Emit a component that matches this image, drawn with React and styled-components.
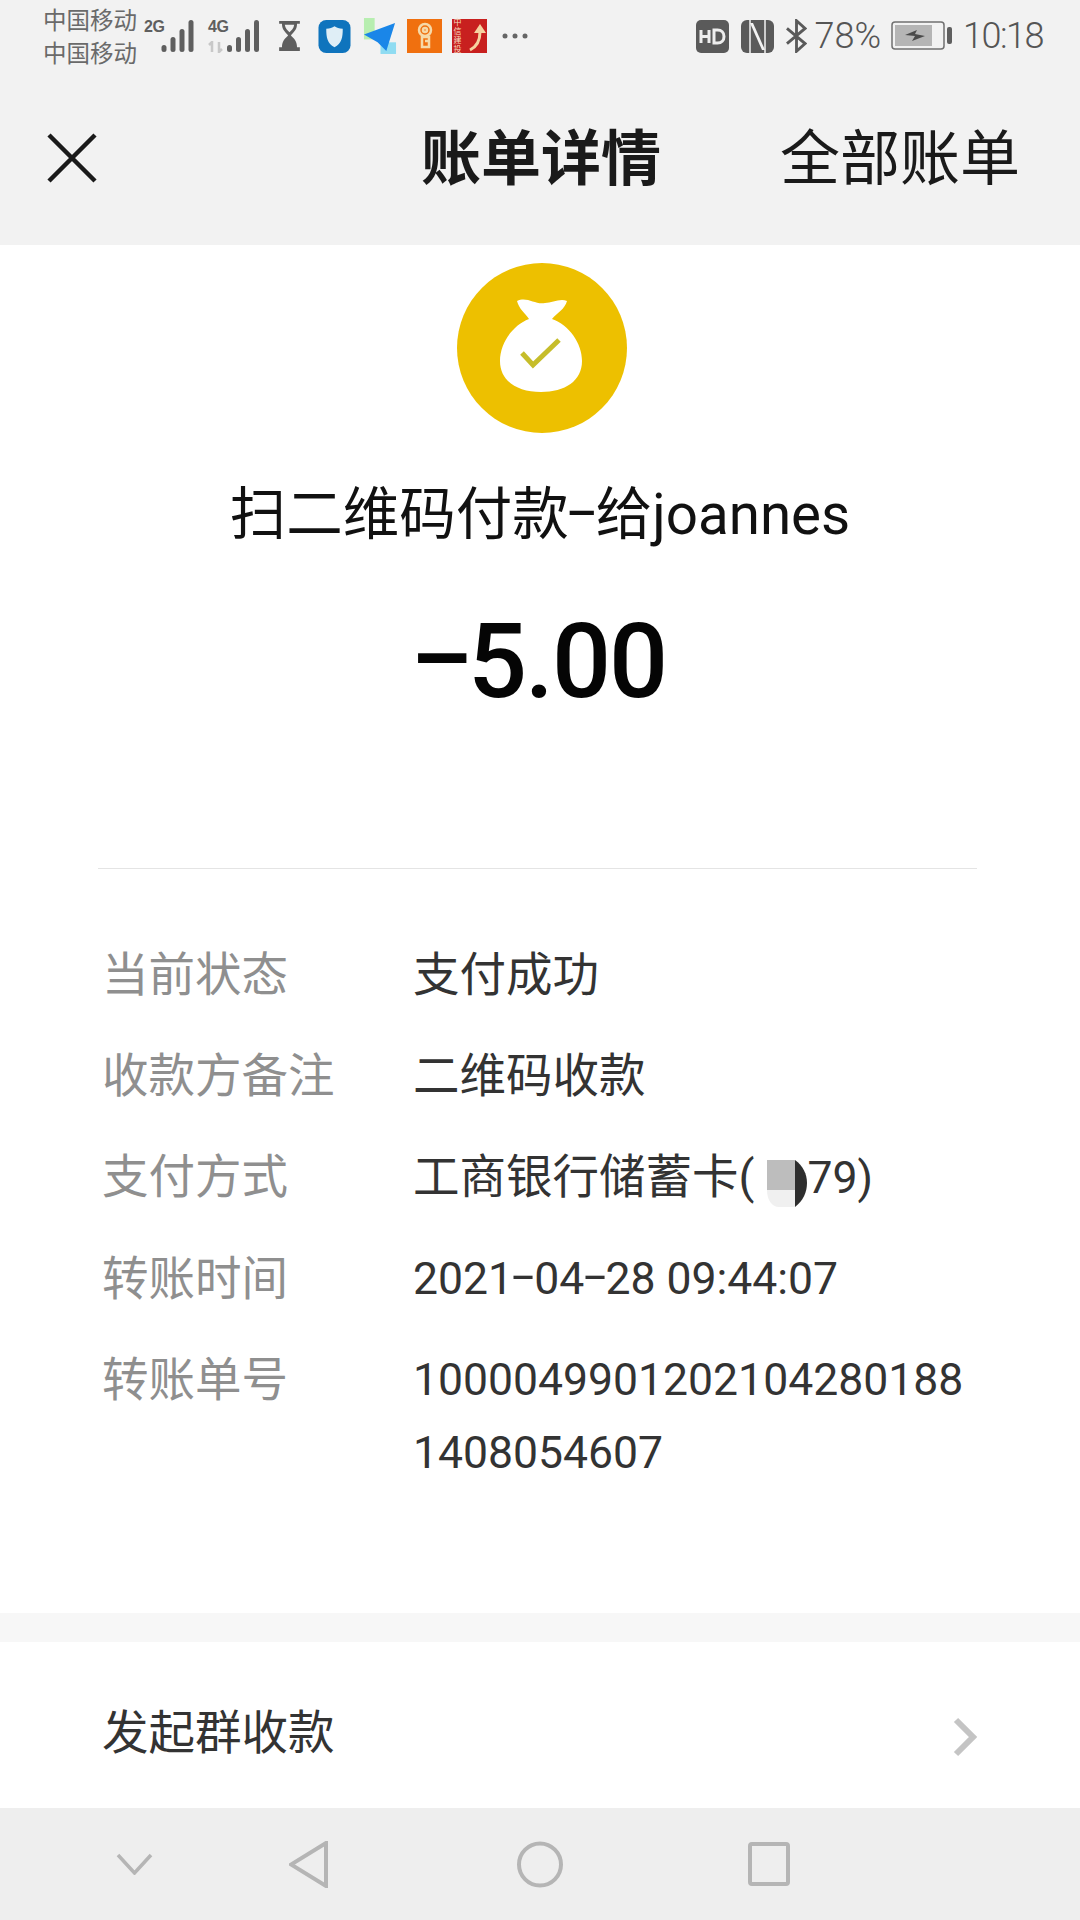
import React from "react";
import styled, { createGlobalStyle } from "styled-components";

const Global = createGlobalStyle`
  html, body { margin: 0; padding: 0; background: #fff; }
  body { font-family: Roboto, "Noto Sans CJK SC", sans-serif; }
`;

const Page = styled.div`
  width: 1080px;
  height: 1920px;
  display: flex;
  flex-direction: column;
  overflow: hidden;
  background: #fff;
`;

const Top = styled.div`
  height: 245px;
  background: #f2f2f2;
`;
const StatusBar = styled.div`
  height: 72px;
  padding: 0 37px 0 44px;
  display: flex;
  align-items: center;
  justify-content: space-between;
  color: #5f5f5f;
`;
const StatusSide = styled.div`
  display: flex;
  align-items: center;
`;
const Carrier = styled.div`
  width: 101px;
  margin-left: -1px;
  padding-top: 3px;
  font-size: 23.5px;
  line-height: 33px;
  color: #6a6a6a;
  white-space: nowrap;
`;
const StatusIcon = styled.svg`
  display: block;
  flex: none;
  margin-left: ${(p) => p.$ml || 0}px;
`;
const StatusText = styled.span`
  font-weight: 300;
  font-size: 36px;
  line-height: 40px;
  letter-spacing: ${(p) => p.$ls || 0}px;
  margin-left: ${(p) => p.$ml || 0}px;
  color: #555;
  white-space: nowrap;
`;
const AppBadge = styled.div`
  width: 35px;
  height: 34px;
  margin-left: ${(p) => p.$ml || 0}px;
  background: ${(p) => p.$bg};
  flex: none;
  display: flex;
  align-items: center;
  justify-content: center;
`;
const BadgeText = styled.span`
  width: 15px;
  color: #f5dcc0;
  font-size: 8px;
  line-height: 9px;
  white-space: normal;
`;
const SignalGroup = styled.div`
  display: flex;
  align-items: flex-start;
  height: 34px;
  margin-left: ${(p) => p.$ml || 0}px;
`;
const TagColumn = styled.div`
  width: ${(p) => p.$w}px;
  flex: none;
  display: flex;
  flex-direction: column;
  gap: 6px;
`;
const Tag = styled.span`
  font-family: "Liberation Sans", sans-serif;
  font-weight: 700;
  font-size: 16px;
  line-height: 16px;
  letter-spacing: -0.5px;
  color: #5f5f5f;
`;

const Header = styled.div`
  height: 173px;
  padding: 2px 60px 0 47px;
  box-sizing: border-box;
  display: grid;
  grid-template-columns: 374px auto 1fr;
  align-items: center;
`;
const Title = styled.div`
  font-size: 60px;
  line-height: 72px;
  font-weight: 700;
  color: #1a1a1a;
`;
const AllBills = styled.div`
  font-size: 60px;
  line-height: 72px;
  color: #1a1a1a;
  text-align: right;
`;
const CloseIcon = styled.svg`
  display: block;
  margin-bottom: 4px;
`;

const Hero = styled.div`
  padding-top: 18px;
  display: flex;
  flex-direction: column;
  align-items: center;
`;
const BagIcon = styled.svg`
  display: block;
  margin-left: 3px;
`;
const Payee = styled.div`
  margin-top: 47px;
  font-size: 56.5px;
  line-height: 70px;
  color: #111;
  white-space: nowrap;
`;
const Amount = styled.div`
  margin-top: 52px;
  font-size: 104px;
  line-height: 120px;
  font-weight: 500;
  letter-spacing: -2px;
  color: #050505;
`;
// the hyphens of the phone's font are much wider than Roboto's
const Dash = styled.span`
  display: inline-block;
  margin: 0 0.1em;
  transform: translateY(-0.07em) scaleX(1.8);
`;

const Divider = styled.div`
  margin: 146px 103px 0 98px;
  height: 1px;
  background: #e4e4e4;
`;

const Details = styled.div`
  margin-top: 70px;
  padding: 0 60px 0 102px;
  display: flex;
  flex-direction: column;
  gap: 28px;
`;
const Row = styled.div`
  display: grid;
  grid-template-columns: 311px 1fr;
  font-size: 46.5px;
  line-height: 73px;
`;
const Label = styled.div`
  color: #8f8f8f;
`;
const Value = styled.div`
  color: #333;
  font-size: ${(p) => (p.$num ? "44.5px" : "inherit")};
`;
const Digits = styled.span`
  font-size: 44.5px;
`;
const Mask = styled.svg`
  display: inline-block;
  vertical-align: -14px;
  margin-left: 13px;
`;

const Band = styled.div`
  margin-top: 123px;
  height: 29px;
  background: #f7f7f7;
`;
const LinkRow = styled.div`
  height: 167px;
  padding: 6px 102px 0 102px;
  box-sizing: border-box;
  display: flex;
  align-items: center;
  justify-content: space-between;
  font-size: 46.5px;
  color: #333;
`;
const Chevron = styled.svg`
  display: block;
  margin-top: 18px;
`;

const NavBar = styled.div`
  height: 112px;
  background: #eee;
  padding-left: 116px;
  display: flex;
  align-items: center;
`;
const NavIcon = styled.svg`
  display: block;
  flex: none;
  margin-left: ${(p) => p.$ml || 0}px;
`;

const Bars = ({ w }) => (
  <StatusIcon width={w} height="34" viewBox="0 0 34 34" fill="#5f5f5f">
    <rect x="0" y="26" width="5" height="7" rx="2.5" />
    <rect x="9" y="18" width="5" height="15" rx="2.5" />
    <rect x="18" y="10" width="5" height="23" rx="2.5" />
    <rect x="27" y="1" width="5" height="32" rx="2.5" />
  </StatusIcon>
);

const App = () => {
  return (
    <Page>
      <Global />
      <Top>
        <StatusBar>
          <StatusSide>
            <Carrier>
              中国移动
              <br />
              中国移动
            </Carrier>
            <SignalGroup>
              <TagColumn $w={17}>
                <Tag>2G</Tag>
              </TagColumn>
              <Bars w={35} />
            </SignalGroup>
            <SignalGroup $ml={12}>
              <TagColumn $w={19}>
                <Tag>4G</Tag>
                <svg width="16" height="12" viewBox="0 0 16 12" fill="none" stroke="#c8c8c8" strokeWidth="2.5">
                  <path d="M4 11V1L1 4M11 1v10l3-3" />
                </svg>
              </TagColumn>
              <Bars w={34} />
            </SignalGroup>
            <StatusIcon $ml={16} width="25" height="32" viewBox="0 0 24 34">
              <path d="M1 1h22v3h-3c0 7-4 9-6.5 12.500C16 19 20 22 20 29h3v4H1v-4h3c0-7 4-10 6.500-12.500C8 13 4 11 4 4H1z" fill="#5f5f5f" />
              <path d="M7 5h10c-.5 4-3 6-5 8-2-2-4.500-4-5-8z" fill="#f2f2f2" />
            </StatusIcon>
            <StatusIcon $ml={16} width="33" height="33" viewBox="0 0 33 34">
              <rect width="33" height="34" rx="8" fill="#0f74bd" />
              <path d="M8 9c4 0 6-1 8.500-2.500C19 8 21 9 25 9c0 9-1 15-8.500 19C9 24 8 18 8 9z" fill="#dfeef6" />
            </StatusIcon>
            <StatusIcon $ml={12} width="34" height="36" viewBox="0 0 35 37">
              <rect x="1" y="0" width="11" height="22" fill="#b7eeb0" />
              <rect x="18" y="25" width="16" height="12" fill="#8fdcf2" />
              <path d="M1 17 33 5 24 34 15 25z" fill="#1a86e8" />
            </StatusIcon>
            <AppBadge $ml={10} $bg="#f0700f">
              <svg width="18" height="28" viewBox="0 0 18 28" fill="none" stroke="#f6d9a8" strokeWidth="2.500">
                <circle cx="9" cy="8" r="6" />
                <circle cx="9" cy="8" r="2" />
                <path d="M6 15h7v10H6zM9 19h4" />
              </svg>
            </AppBadge>
            <AppBadge $ml={10} $bg="#c8201f">
              <BadgeText>中信建投</BadgeText>
              <svg width="17" height="32" viewBox="0 0 17 32" fill="none">
                <path d="M1 30c8-4 10-10 10-18" stroke="#f6d2a0" strokeWidth="3" />
                <path d="M5 13 11 4l6 9z" fill="#f6d2a0" />
              </svg>
            </AppBadge>
            <StatusIcon $ml={15} width="26" height="6" viewBox="0 0 26 6" fill="#666">
              <circle cx="3" cy="3" r="2.500" />
              <circle cx="13" cy="3" r="2.500" />
              <circle cx="23" cy="3" r="2.500" />
            </StatusIcon>
          </StatusSide>
          <StatusSide>
            <StatusIcon width="33" height="33" viewBox="0 0 33 33">
              <rect width="33" height="33" rx="5" fill="#5a5a5a" />
              <path d="M5 10v13M5 16.500h8M13 10v13" stroke="#eee" strokeWidth="3" fill="none" />
              <path d="M18 10v13h3.500c4 0 6.500-2.500 6.500-6.500S25.500 10 21.500 10z" stroke="#eee" strokeWidth="3" fill="none" />
            </StatusIcon>
            <StatusIcon $ml={12} width="33" height="33" viewBox="0 0 33 33">
              <rect width="33" height="33" rx="6" fill="#5a5a5a" />
              <path d="M9 0v33M24 0v33" stroke="#f2f2f2" strokeWidth="1.500" fill="none" />
              <path d="M9 3h3l12 27h-3z" fill="#f2f2f2" />
            </StatusIcon>
            <StatusIcon $ml={12} width="21" height="34" viewBox="0 0 22 34" fill="none" stroke="#5a5a5a" strokeWidth="3">
              <path d="M1 9l19 16-9 8V1l9 8L1 25" />
            </StatusIcon>
            <StatusText $ml={8}>78%</StatusText>
            <StatusIcon $ml={10} width="61" height="30" viewBox="0 0 61 30">
              <rect x="1" y="1" width="52" height="27" rx="3" fill="none" stroke="#707070" strokeWidth="1.500" />
              <rect x="4" y="4" width="37" height="21" fill="#b5b5b5" />
              <path d="M14 14l12-5-2 4 10 2-13 5 3-5z" fill="#4a4a4a" />
              <rect x="56" y="6" width="5" height="17" rx="2" fill="#5f5f5f" />
            </StatusIcon>
            <StatusText $ml={11} $ls={-1.5}>10:18</StatusText>
          </StatusSide>
        </StatusBar>
        <Header>
          <CloseIcon width="50" height="50" viewBox="0 0 50 50" fill="none" stroke="#1a1a1a" strokeWidth="4.500">
            <path d="M2 2l46 46M48 2L2 48" />
          </CloseIcon>
          <Title>账单详情</Title>
          <AllBills>全部账单</AllBills>
        </Header>
      </Top>
      <Hero>
        <BagIcon width="170" height="170" viewBox="0 0 170 170">
          <circle cx="85" cy="85" r="85" fill="#edc000" />
          <path
            d="M60 38C70 33 78 42 88 40C95 40 103 35 110 38C108 46 100 50 95 56C112 62 125 80 125 98C125 118 108 129 84 129C60 129 43 118 43 98C43 80 56 62 72 56C68 50 62 46 60 38Z"
            fill="#fff"
          />
          <path d="M65 90 76 102 102 77" fill="none" stroke="#c6bd2a" strokeWidth="5" />
        </BagIcon>
        <Payee>
          扫二维码付款<Dash>-</Dash>给joannes
        </Payee>
        <Amount>
          <Dash>-</Dash>5.00
        </Amount>
      </Hero>
      <Divider />
      <Details>
        <Row>
          <Label>当前状态</Label>
          <Value>支付成功</Value>
        </Row>
        <Row>
          <Label>收款方备注</Label>
          <Value>二维码收款</Value>
        </Row>
        <Row>
          <Label>支付方式</Label>
          <Value>
            工商银行储蓄卡(
            <Mask width="40" height="47" viewBox="0 0 40 47">
              <rect x="0" y="0" width="28" height="30" fill="#bdbdbd" />
              <path d="M0 30h28v17H12C5 47 0 40 0 30z" fill="#f0f0f0" />
              <path d="M28 0c8 6 12 14 12 23s-4 18-12 24z" fill="#2e2e2e" />
            </Mask>
            <Digits>79)</Digits>
          </Value>
        </Row>
        <Row>
          <Label>转账时间</Label>
          <Value $num>
            2021<Dash>-</Dash>04<Dash>-</Dash>28 09:44:07
          </Value>
        </Row>
        <Row>
          <Label>转账单号</Label>
          <Value $num>
            1000049901202104280188
            <br />
            1408054607
          </Value>
        </Row>
      </Details>
      <Band />
      <LinkRow>
        发起群收款
        <Chevron width="26" height="40" viewBox="0 0 26 40" fill="none" stroke="#c4c4c4" strokeWidth="6">
          <path d="M4 3l17 17L4 37" />
        </Chevron>
      </LinkRow>
      <NavBar>
        <NavIcon width="37" height="22" viewBox="0 0 37 22" fill="none" stroke="#b5b5b5" strokeWidth="3.500">
          <path d="M2 2l16.500 18L35 2" />
        </NavIcon>
        <NavIcon $ml={136} width="39" height="47" viewBox="0 0 39 47" fill="none" stroke="#b5b5b5" strokeWidth="4">
          <path d="M37 2v43L2 23.500z" />
        </NavIcon>
        <NavIcon $ml={189} width="46" height="47" viewBox="0 0 46 47" fill="none" stroke="#b5b5b5" strokeWidth="4">
          <circle cx="23" cy="23.500" r="21" />
        </NavIcon>
        <NavIcon $ml={185} width="42" height="44" viewBox="0 0 42 44" fill="none" stroke="#b5b5b5" strokeWidth="4">
          <rect x="2" y="2" width="38" height="40" rx="2" />
        </NavIcon>
      </NavBar>
    </Page>
  );
};

export default App;
